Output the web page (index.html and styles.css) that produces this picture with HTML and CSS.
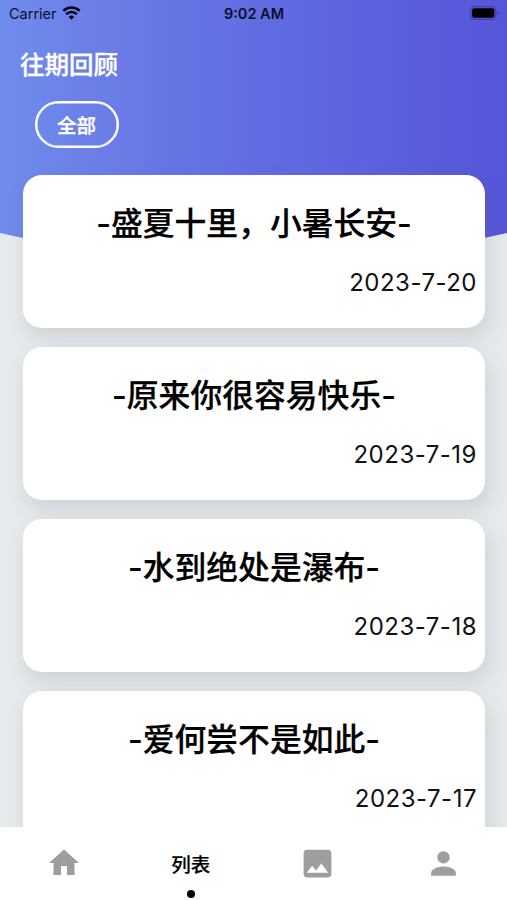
FILE: index.html
```
<!DOCTYPE html>
<html lang="zh-CN">
<head>
    <meta charset="UTF-8">
    <meta name="viewport" content="width=device-width, initial-scale=1.0">
    <title>往期回顾</title>
    <link rel="stylesheet" href="styles.css">
</head>
<body>
    <div class="app">
        <svg class="header-bg" viewBox="0 0 507 264" preserveAspectRatio="none">
            <defs>
                <linearGradient id="sky" x1="0" y1="0" x2="1" y2="0">
                    <stop offset="0" stop-color="#6f8cec"/>
                    <stop offset="0.25" stop-color="#6a7ae6"/>
                    <stop offset="0.5" stop-color="#626de2"/>
                    <stop offset="1" stop-color="#5755d9"/>
                </linearGradient>
            </defs>
            <path d="M0 0H507V233Q253.5 292 0 233Z" fill="url(#sky)"/>
        </svg>

        <div class="status-bar">
            <div class="carrier">
                <span>Carrier</span>
                <svg width="19" height="14" viewBox="0 0 19 14">
                    <path d="M9.5 13.8L6.7 10.8A4.3 4.3 0 0 1 12.3 10.8Z" fill="#05051c"/>
                    <path d="M4.1 8.1A7.8 7.8 0 0 1 14.9 8.1" fill="none" stroke="#05051c" stroke-width="2.5"/>
                    <path d="M1.3 4.9A11.9 11.9 0 0 1 17.7 4.9" fill="none" stroke="#05051c" stroke-width="2.5"/>
                </svg>
            </div>
            <div class="time">9:02 AM</div>
            <div class="battery">
                <svg width="31" height="14" viewBox="0 0 31 14">
                    <rect x="0.7" y="0.7" width="25" height="12.6" rx="3.6" fill="none" stroke="#403db0" stroke-width="1.2"/>
                    <rect x="2.1" y="2.3" width="22.2" height="9.4" rx="1.9" fill="#000"/>
                    <path d="M27.4 5V9.2Q29 8.4 29 7.1T27.4 5Z" fill="#403db0"/>
                </svg>
            </div>
        </div>

        <h1 class="page-title">往期回顾</h1>
        <div class="filters">
            <button class="filter">全部</button>
        </div>

        <div class="list">
            <div class="card">
                <h2>-盛夏十里，小暑长安-</h2>
                <p class="date">2023-7-20</p>
            </div>
            <div class="card">
                <h2>-原来你很容易快乐-</h2>
                <p class="date">2023-7-19</p>
            </div>
            <div class="card">
                <h2>-水到绝处是瀑布-</h2>
                <p class="date">2023-7-18</p>
            </div>
            <div class="card">
                <h2>-爱何尝不是如此-</h2>
                <p class="date">2023-7-17</p>
            </div>
        </div>

        <nav class="tab-bar">
            <a class="tab">
                <svg width="36" height="36" viewBox="0 0 24 24"><path d="M10 20v-6h4v6h5v-8h3L12 3 2 12h3v8z"/></svg>
            </a>
            <a class="tab active">
                <span>列表</span>
                <i class="dot"></i>
            </a>
            <a class="tab">
                <svg width="37" height="37" viewBox="0 0 24 24"><path d="M21 19V5c0-1.100-.9-2-2-2H5c-1.100 0-2 .9-2 2v14c0 1.100.9 2 2 2h14c1.100 0 2-.9 2-2zM8.500 13.500l2.500 3.010L14.500 12l4.500 6H5l3.500-4.500z"/></svg>
            </a>
            <a class="tab">
                <svg width="37" height="37" viewBox="0 0 24 24"><path d="M12 12c2.210 0 4-1.790 4-4s-1.790-4-4-4-4 1.790-4 4 1.790 4 4 4zm0 2c-2.670 0-8 1.340-8 4v2h16v-2c0-2.660-5.330-4-8-4z"/></svg>
            </a>
        </nav>
    </div>
</body>
</html>
```
FILE: styles.css
```
* {
    box-sizing: border-box;
}
body {
    margin: 0;
    font-family: Inter, "Noto Sans CJK SC", sans-serif;
    color: #000;
}
.app {
    position: relative;
    display: flex;
    flex-direction: column;
    height: 900px;
    overflow: hidden;
    background-color: #e5eaed;
}
/* curved gradient behind the header */
.header-bg {
    position: absolute;
    top: 0;
    left: 0;
    width: 100%;
    height: 264px;
}
.status-bar {
    position: relative;
    display: grid;
    grid-template-columns: 1fr auto 1fr;
    align-items: center;
    height: 27px;
    padding: 0 6px 0 9px;
    font-size: 14.5px;
    color: #0c0e2c;
}
.carrier {
    display: flex;
    align-items: center;
    gap: 5px;
}
.carrier svg,
.battery svg {
    display: block;
}
.carrier svg {
    margin-top: -1px;
}
.time {
    margin-left: -2px;
    font-weight: 600;
}
.battery {
    display: flex;
    justify-content: flex-end;
    margin-top: -1px;
}
.page-title {
    position: relative;
    margin: 20px 0 0 20px;
    font-size: 24.5px;
    line-height: 37px;
    font-weight: 500;
    -webkit-text-stroke: 0.3px #fff;
    color: #fff;
}
.filters {
    position: relative;
    padding: 17px 34.5px 0;
}
.filter {
    display: block;
    width: 84px;
    height: 47px;
    padding: 0;
    border: 2px solid #fff;
    border-radius: 24px;
    background: none;
    box-shadow: inset 0 0 0 0.5px #fff;
    color: #fff;
    font-family: inherit;
    font-size: 19.5px;
    font-weight: 500;
    -webkit-text-stroke: 0.3px #fff;
}
.list {
    position: relative;
    flex: 1;
    min-height: 0;
    display: flex;
    flex-direction: column;
    gap: 19.3px;
    padding: 26.5px 22px 0 23px;
    overflow: hidden;
}
.card {
    flex: none;
    height: 153px;
    padding: 26px 8px 0;
    border-radius: 19px;
    background-color: #fff;
    box-shadow: 4px 10px 20px rgba(90, 95, 95, 0.17);
}
.card h2 {
    margin: 0;
    font-size: 31.8px;
    line-height: 46px;
    font-weight: 500;
    -webkit-text-stroke: 0.25px #000;
    text-align: center;
}
.date {
    margin: 18px 0 0;
    font-size: 24px;
    line-height: 36px;
    letter-spacing: 0.5px;
    text-align: right;
    color: #111;
}
.tab-bar {
    position: relative;
    flex: none;
    display: grid;
    grid-template-columns: repeat(4, 1fr);
    height: 73px;
    padding-left: 1px;
    background-color: #fff;
}
.tab {
    display: flex;
    flex-direction: column;
    align-items: center;
    padding-top: 18px;
    fill: #9e9e9e;
}
.tab.active {
    padding-top: 24px;
    font-size: 19.5px;
    line-height: 29px;
    font-weight: 500;
    -webkit-text-stroke: 0.2px #000;
}
.dot {
    width: 8px;
    height: 8px;
    margin-top: 10px;
    border-radius: 50%;
    background-color: #000;
}
```
